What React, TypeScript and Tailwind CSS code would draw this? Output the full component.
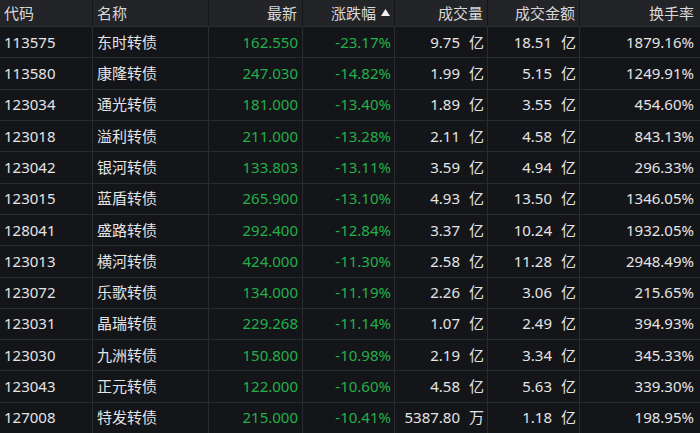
const rows = [
  ["113575", "东时转债", "162.550", "-23.17%", "9.75", "亿", "18.51", "1879.16%"],
  ["113580", "康隆转债", "247.030", "-14.82%", "1.99", "亿", "5.15", "1249.91%"],
  ["123034", "通光转债", "181.000", "-13.40%", "1.89", "亿", "3.55", "454.60%"],
  ["123018", "溢利转债", "211.000", "-13.28%", "2.11", "亿", "4.58", "843.13%"],
  ["123042", "银河转债", "133.803", "-13.11%", "3.59", "亿", "4.94", "296.33%"],
  ["123015", "蓝盾转债", "265.900", "-13.10%", "4.93", "亿", "13.50", "1346.05%"],
  ["128041", "盛路转债", "292.400", "-12.84%", "3.37", "亿", "10.24", "1932.05%"],
  ["123013", "横河转债", "424.000", "-11.30%", "2.58", "亿", "11.28", "2948.49%"],
  ["123072", "乐歌转债", "134.000", "-11.19%", "2.26", "亿", "3.06", "215.65%"],
  ["123031", "晶瑞转债", "229.268", "-11.14%", "1.07", "亿", "2.49", "394.93%"],
  ["123030", "九洲转债", "150.800", "-10.98%", "2.19", "亿", "3.34", "345.33%"],
  ["123043", "正元转债", "122.000", "-10.60%", "4.58", "亿", "5.63", "339.30%"],
  ["127008", "特发转债", "215.000", "-10.41%", "5387.80", "万", "1.18", "198.95%"],
];

const cols = "grid grid-cols-[93px_116px_94px_92px_93px_92px_120px]";

export default function App() {
  return (
    <div
      className="flex h-[433px] w-[700px] flex-col overflow-hidden bg-[#141519] text-[15px] text-[#e4e4e4]"
      style={{ fontFamily: '"Noto Sans", "Noto Sans CJK SC", sans-serif' }}
    >
      <div className={`${cols} h-[26px] shrink-0 bg-[#232428] text-[#d8d8d8] leading-none`}>
        <div className="flex items-center border-r border-[#141519] pl-[4px]">代码</div>
        <div className="flex items-center border-r border-[#141519] pl-[4px]">名称</div>
        <div className="flex items-center justify-end border-r border-[#141519] pr-[5px]">最新</div>
        <div className="flex items-center justify-end gap-[5px] border-r border-[#141519] pr-[4px]">
          涨跌幅
          <svg width="9" height="7" viewBox="0 0 9 7" className="mt-[-1px]">
            <path d="M4.5 0 L9 7 L0 7 Z" fill="#f0f0f0" />
          </svg>
        </div>
        <div className="flex items-center justify-end border-r border-[#141519] pr-[4px]">成交量</div>
        <div className="flex items-center justify-end border-r border-[#141519] pr-[4px]">成交金额</div>
        <div className="flex items-center justify-end pr-[6px]">换手率</div>
      </div>
      {rows.map((r) => (
        <div key={r[0]} className={`${cols} flex-1 border-t border-[#2a2b2f] leading-none`}>
          <div className="flex items-center border-r border-[#2a2b2f] pl-[4px]">{r[0]}</div>
          <div className="flex items-center border-r border-[#2a2b2f] pl-[4px]">{r[1]}</div>
          <div className="flex items-center justify-end border-r border-[#2a2b2f] pr-[4px] text-[#22b04a]">{r[2]}</div>
          <div className="flex items-center justify-end border-r border-[#2a2b2f] pr-[3px] text-[#22b04a]">{r[3]}</div>
          <div className="flex items-center justify-end gap-[9px] border-r border-[#2a2b2f] pr-[3px]">
            <span>{r[4]}</span>
            <span>{r[5]}</span>
          </div>
          <div className="flex items-center justify-end gap-[9px] border-r border-[#2a2b2f] pr-[3px]">
            <span>{r[6]}</span>
            <span>亿</span>
          </div>
          <div className="flex items-center justify-end pr-[6px]">{r[7]}</div>
        </div>
      ))}
    </div>
  );
}
